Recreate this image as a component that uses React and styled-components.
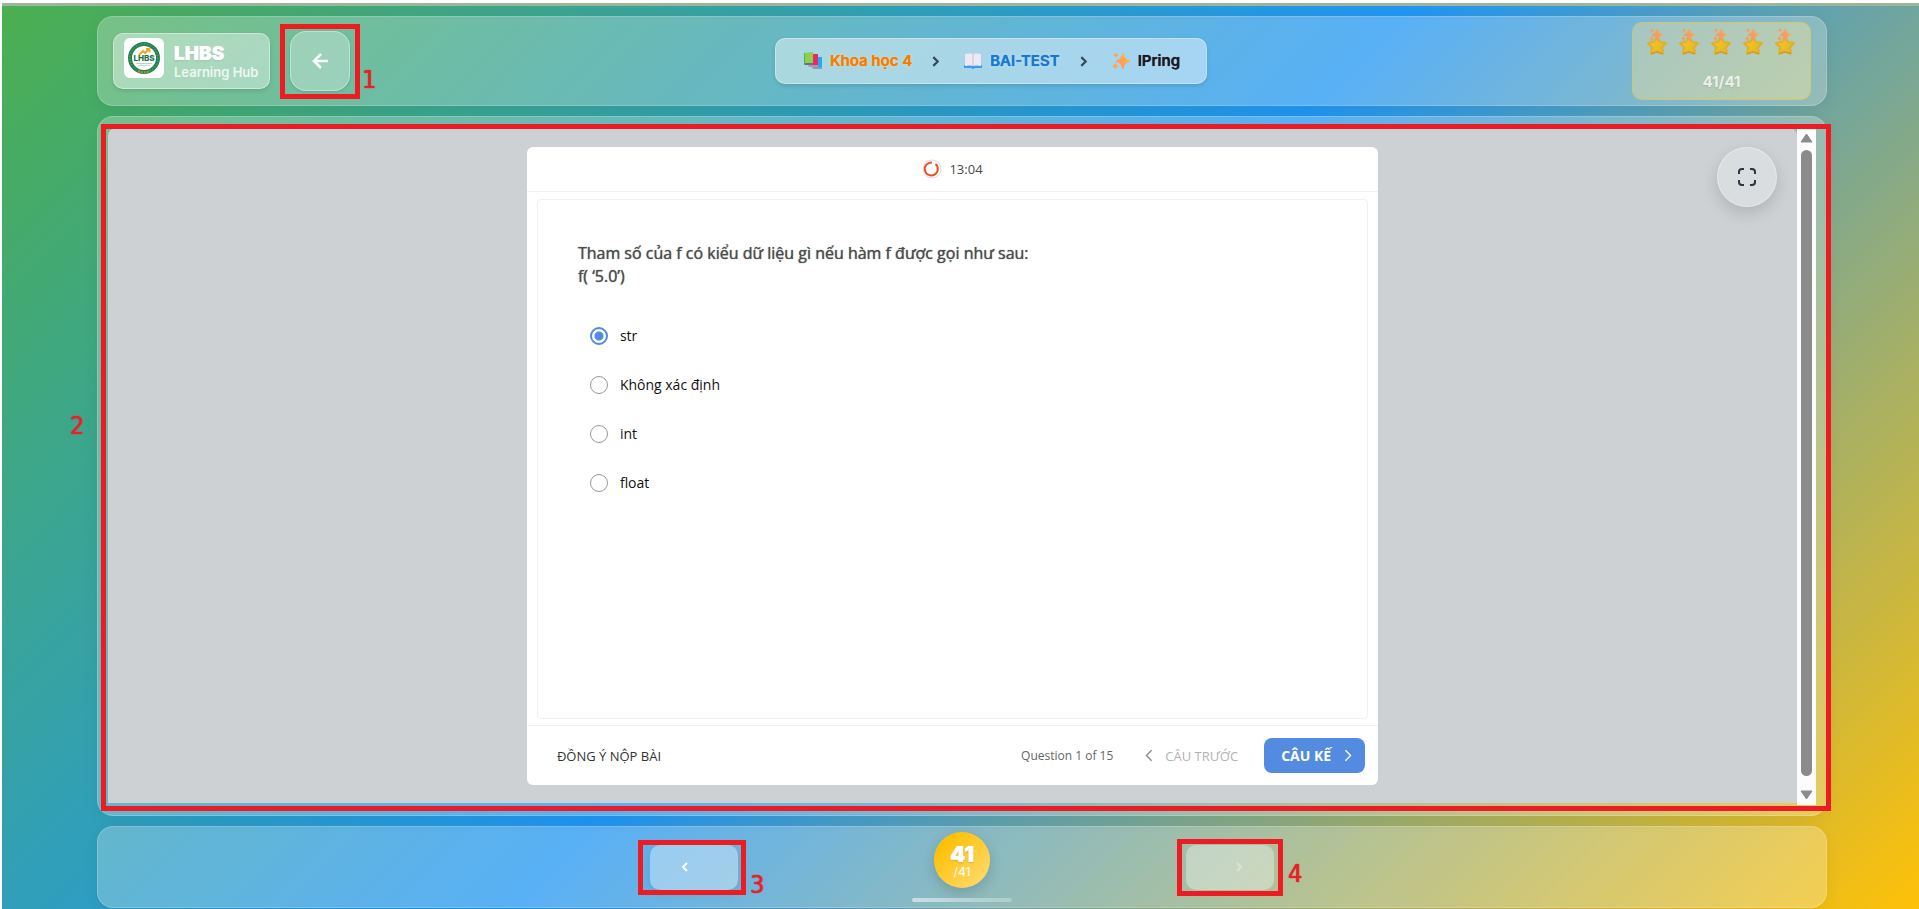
import React, { useState } from "react";
import styled, { createGlobalStyle, css } from "styled-components";

const GlobalStyle = createGlobalStyle`
  *, *::before, *::after { box-sizing: border-box; }
  body { margin: 0; background: #fff; font-family: Inter, "Liberation Sans", sans-serif; }
  button, input { font: inherit; }
`;

const Frame = styled.div`
  min-height: 100vh;
  padding: 3px 0 0 2px;
  display: flex;
  flex-direction: column;
`;

const Page = styled.div`
  flex: 1;
  display: flex;
  flex-direction: column;
  gap: 10px;
  padding: 10px 92px 1px 95px;
  border-top: 3px solid #9db69b;
  background: linear-gradient(135deg, #4caf50 0%, #2196f3 50%, #ffc107 100%);
`;

const glass = css`
  background: rgba(255, 255, 255, 0.25);
  border: 1px solid rgba(255, 255, 255, 0.2);
  border-radius: 16px;
  box-shadow: 0 4px 16px rgba(0, 0, 0, 0.06);
`;

const Header = styled.header`
  ${glass}
  height: 90px;
  padding: 0 15px;
  display: flex;
  justify-content: space-between;
  align-items: center;
`;

const HeaderLeft = styled.div`
  display: flex;
  align-items: center;
  gap: 20px;
`;

const Brand = styled.a`
  display: flex;
  align-items: center;
  gap: 10px;
  width: 157px;
  height: 56px;
  padding: 0 10px;
  border: 1px solid rgba(255, 255, 255, 0.4);
  border-radius: 10px;
  background: rgba(255, 255, 255, 0.4);
  box-shadow: 0 2px 4px rgba(0, 0, 0, 0.12);
  color: #fff;
  text-decoration: none;
`;

const LogoTile = styled.span`
  display: grid;
  place-items: center;
  flex: none;
  width: 40px;
  height: 40px;
  margin-bottom: 6px;
  border-radius: 6px;
  background: #fff;
`;

const BrandText = styled.span`
  display: flex;
  flex-direction: column;
  padding-top: 2px;
  white-space: nowrap;
`;

const BrandName = styled.strong`
  font-size: 19px;
  line-height: 20px;
  font-weight: 900;
  text-shadow: 0 0 1px #fff, 0 1px 2px rgba(0, 0, 0, 0.12);
`;

const BrandSub = styled.span`
  font-size: 13px;
  line-height: 16px;
  font-weight: 600;
  opacity: 0.8;
`;

const Marked = styled.div`
  position: relative;
  display: flex;
`;

const Outline = styled.span`
  position: absolute;
  inset: ${(p) => p.$inset};
  border: 5px solid #ed1c24;
  pointer-events: none;
  z-index: 2;
`;

const Mark = styled.span`
  position: absolute;
  ${(p) => p.$place}
  font: 400 25px/28px "DejaVu Sans Condensed", "DejaVu Sans", sans-serif;
  color: #e5222b;
  text-shadow: 0 0 1px #e5222b, 0 0 1px #e5222b;
  pointer-events: none;
  z-index: 2;
`;

const BackButton = styled.button`
  display: grid;
  place-items: center;
  width: 60px;
  height: 60px;
  padding: 0;
  color: #fff;
  border: 1px solid rgba(255, 255, 255, 0.35);
  border-radius: 16px;
  background: rgba(255, 255, 255, 0.3);
  box-shadow: 0 1px 3px rgba(0, 0, 0, 0.12);
`;

const Crumbs = styled.nav`
  display: flex;
  align-items: center;
  height: 46px;
  padding: 0 26px 0 28px;
  gap: 20px;
  border: 1px solid rgba(255, 255, 255, 0.35);
  border-radius: 10px;
  background: rgba(255, 255, 255, 0.45);
  box-shadow: 0 2px 4px rgba(0, 0, 0, 0.12);
`;

const Crumb = styled.a`
  display: flex;
  align-items: center;
  gap: 8px;
  font-size: 15px;
  line-height: 20px;
  font-weight: 600;
  color: ${(p) => p.$color};
  text-decoration: none;
  white-space: nowrap;
  text-shadow: 0 0 1px ${(p) => p.$color}, 0 0 3px rgba(255, 255, 255, 0.7);
  & ~ & {
    margin-left: 5px;
  }
`;

const Score = styled.div`
  display: flex;
  flex-direction: column;
  align-items: center;
  width: 179px;
  height: 78px;
  padding-top: 2px;
  gap: 15px;
  border: 1px solid rgba(255, 193, 7, 0.35);
  border-radius: 10px;
  background: linear-gradient(135deg, rgba(255, 193, 7, 0.15), rgba(255, 215, 64, 0.2)), rgba(255, 255, 255, 0.25);
`;

const Stars = styled.div`
  display: flex;
  gap: 10px;
`;

const ScoreText = styled.span`
  font-size: 15px;
  line-height: 20px;
  font-weight: 700;
  color: rgba(255, 255, 255, 0.8);
  text-shadow: 0 1px 2px rgba(0, 0, 0, 0.12);
`;

const Stage = styled.main`
  ${glass}
  position: relative;
  flex: 1;
  display: flex;
  padding: 11px 10px 10px;
`;

const Viewer = styled.section`
  position: relative;
  flex: 1;
  display: flex;
  justify-content: center;
  margin-bottom: 2px;
  padding: 19px 0 18px;
  border-radius: 8px 8px 0 0;
  background: #cdd1d4;
`;

const Scroll = styled.div`
  display: flex;
  flex-direction: column;
  align-items: center;
  justify-content: space-between;
  width: 19px;
  padding: 5px 0 5px;
  background: #fcfcfc;
`;

const Thumb = styled.div`
  flex: 1;
  width: 11px;
  margin: 7px 0 14px;
  border-radius: 6px;
  background: #8b8b8b;
`;

const FullButton = styled.button`
  position: absolute;
  top: 19px;
  right: 20px;
  display: grid;
  place-items: center;
  width: 60px;
  height: 60px;
  padding: 0;
  border: 1px solid rgba(255, 255, 255, 0.35);
  border-radius: 50%;
  background: #d9dddf;
  color: #2c3545;
  box-shadow: 0 6px 16px rgba(0, 0, 0, 0.14);
`;

const Quiz = styled.form`
  display: flex;
  flex-direction: column;
  width: 50.4%;
  border-radius: 6px;
  background: #fff;
  font-family: "Open Sans", "Noto Sans", sans-serif;
`;

const Timer = styled.div`
  display: flex;
  align-items: center;
  justify-content: center;
  gap: 7px;
  height: 45px;
  padding-bottom: 1px;
  border-bottom: 1px solid #f1f1f1;
  font-size: 13px;
  line-height: 18px;
  color: #4a4a4a;
`;

const Question = styled.fieldset`
  flex: 1;
  margin: 7px 10px 6px;
  padding: 0 40px;
  min-width: 0;
  border: 1px solid #f1f1f1;
  border-radius: 4px;
`;

const Prompt = styled.legend`
  float: left;
  width: 100%;
  padding: 42px 0 38px;
  font-size: 16px;
  line-height: 23px;
  font-weight: 500;
  color: #4d4d4d;
  text-shadow: 0 0 1px #4d4d4d;
`;

const Options = styled.div`
  clear: both;
  display: flex;
  flex-direction: column;
  gap: 29px;
  padding-left: 12px;
`;

const Option = styled.label`
  display: flex;
  align-items: center;
  gap: 12px;
  font-size: 14px;
  line-height: 20px;
  color: #111;
`;

const Radio = styled.input`
  appearance: none;
  width: 18px;
  height: 18px;
  margin: 0;
  border: 1px solid #999;
  border-radius: 50%;
  background: #fff;
  &:checked {
    border: 2px solid #4f8be0;
    background: radial-gradient(circle, #4f8be0 0 4px, #fff 5px);
  }
`;

const QuizFooter = styled.div`
  display: flex;
  align-items: center;
  height: 60px;
  padding: 0 13px 0 30px;
  border-top: 1px solid #f1f1f1;
  font-size: 13px;
  line-height: 18px;
`;

const TextButton = styled.button`
  display: flex;
  align-items: center;
  gap: 12px;
  padding: 0;
  border: 0;
  background: none;
  color: ${(p) => p.$color};
`;

const Counter = styled.span`
  margin: 0 32px 0 auto;
  font-size: 12px;
  color: #666;
`;

const NextButton = styled.button`
  display: flex;
  align-items: center;
  justify-content: space-between;
  width: 101px;
  height: 35px;
  margin-left: 26px;
  padding: 0 13px 0 17px;
  border: 0;
  border-radius: 8px;
  background: #528be0;
  color: #fff;
  font-size: 14px;
  font-weight: 700;
`;

const Pager = styled.footer`
  ${glass}
  height: 82px;
  display: grid;
  grid-template-columns: 1fr 100px 1fr;
  column-gap: 174px;
  align-items: center;
`;

const PageButton = styled.button`
  display: grid;
  align-items: center;
  justify-items: ${(p) => (p.$next ? "end" : "start")};
  width: 88px;
  height: 45px;
  padding: 0 32px;
  border: 0;
  border-radius: 10px;
  background: rgba(255, 255, 255, 0.35);
  color: ${(p) => (p.$next ? "rgba(255, 255, 255, 0.35)" : "#fff")};
  box-shadow: ${(p) => (p.$next ? "none" : "0 3px 10px rgba(0, 0, 0, 0.1)")};
`;

const PagerSide = styled.div`
  display: flex;
  justify-content: ${(p) => (p.$end ? "flex-start" : "flex-end")};
`;

const Progress = styled.div`
  display: flex;
  flex-direction: column;
  align-items: center;
  gap: 10px;
`;

const Badge = styled.div`
  display: flex;
  flex-direction: column;
  align-items: center;
  justify-content: center;
  width: 56px;
  height: 56px;
  border-radius: 50%;
  background: linear-gradient(135deg, #ffc107 20%, #ffd96a 90%);
  color: #fff;
  box-shadow: 0 5px 14px rgba(0, 0, 0, 0.16);
`;

const BadgeNow = styled.strong`
  font-size: 22px;
  line-height: 24px;
  font-weight: 900;
  text-shadow: 0 0 1px #fff, 0 1px 2px rgba(0, 0, 0, 0.2);
`;

const BadgeTotal = styled.span`
  font-size: 12px;
  line-height: 12px;
  font-weight: 500;
  opacity: 0.9;
`;

const Track = styled.div`
  width: 100px;
  height: 4px;
  border-radius: 2px;
  background: linear-gradient(90deg, rgba(255, 255, 255, 0.55), rgba(255, 255, 255, 0.25));
`;

function Logo() {
  return (
    <svg width="34" height="34" viewBox="0 0 34 34" aria-hidden="true">
      <circle cx="17" cy="17" r="14" fill="#fff" stroke="#23834e" strokeWidth="4" />
      <circle cx="17" cy="17" r="14" fill="none" stroke="#7fb795" strokeWidth="1" strokeDasharray="1 2" />
      <path d="M11 30Q17 32.500 23 30" fill="none" stroke="#b3912c" strokeWidth="2" strokeDasharray="2 1" />
      <path d="M12 14l4-4 2 2 4-4M19 8h3.500v3.500" fill="none" stroke="#eda72e" strokeWidth="2" />
      <text x="17" y="20" textAnchor="middle" fontFamily="Inter, sans-serif" fontSize="8" fontWeight="800" fill="#1c7145">LHBS</text>
      <path d="M9 22.500h16M11 25q3-2 6 0q3-2 6 0" fill="none" stroke="#b9d5c5" strokeWidth="1" />
    </svg>
  );
}

function SparkleShape() {
  return (
    <>
      <path d="M11 1Q12 7.500 18 9Q12 10.500 11 17Q9.500 10.500 4 9Q9.500 7.500 11 1Z" strokeWidth="1" strokeLinejoin="round" />
      <path d="M4 0Q4.500 2.500 7 3Q4.500 3.500 4 6Q3.500 3.500 1 3Q3.500 2.500 4 0Z" />
      <path d="M3.500 10Q4.300 13.500 7.500 14Q4.300 14.500 3.500 18Q2.700 14.500 0 14Q2.700 13.500 3.500 10Z" />
    </>
  );
}

function Sparkles() {
  return (
    <svg width="18" height="18" viewBox="0 0 18 18" aria-hidden="true">
      <defs>
        <linearGradient id="spark" x1="0" y1="1" x2="1" y2="0">
          <stop offset="0" stopColor="#ff8a6c" />
          <stop offset="1" stopColor="#ffc23e" />
        </linearGradient>
      </defs>
      <g fill="url(#spark)" stroke="url(#spark)" strokeWidth="0"><SparkleShape /></g>
    </svg>
  );
}

function Books() {
  return (
    <svg width="18" height="18" viewBox="0 0 18 18" aria-hidden="true">
      <path d="M9 5h9v10H9z" fill="#25a9f0" />
      <path d="M8 15h10v2H9z" fill="#7f9fc4" />
      <path d="M5 2h9v11H5z" fill="#ea2862" />
      <path d="M4 13h10v2H5z" fill="#b792b4" />
      <path d="M0 1l9-1v12H0z" fill="#8bd14d" />
      <path d="M0 11h9v2H1q-1 0-1-2z" fill="#66727f" />
      <path d="M0 1h1v11H0z" fill="#60ae3c" />
    </svg>
  );
}

function OpenBook() {
  return (
    <svg width="18" height="16" viewBox="0 0 18 16" aria-hidden="true">
      <path d="M0 12h18v3h-7l-2 1-2-1H0z" fill="#3e9be8" />
      <path d="M0 3h18v9H0z" fill="#a9cdf0" />
      <path d="M1 1q5-1 8 0q3-1 8 0v12q-5-1-8 0q-3-1-8 0z" fill="#eee8f5" />
      <path d="M9 1v12" stroke="#c7bfd5" />
    </svg>
  );
}

function Star() {
  return (
    <svg width="22" height="32" viewBox="0 0 22 32" aria-hidden="true">
      <defs>
        <linearGradient id="gold" x1="0" y1="0" x2="1" y2="1">
          <stop offset="0" stopColor="#f3c92e" />
          <stop offset="1" stopColor="#e2b526" />
        </linearGradient>
        <linearGradient id="peach" x1="0" y1="1" x2="1" y2="0">
          <stop offset="0" stopColor="#f88d70" />
          <stop offset="1" stopColor="#f3b050" />
        </linearGradient>
      </defs>
      <path d="M11 12l3 5 6 1-4 4.500 1 6-6-2-6 2 1-6L2 18l6-1z" fill="url(#gold)" stroke="#dfb128" strokeWidth="2" strokeLinejoin="round" />
      <path d="M5 29l6-2 6 2" fill="none" stroke="#c98f2a" strokeWidth="1" />
      <g fill="url(#peach)" stroke="url(#peach)" strokeWidth="0" transform="translate(3 3) scale(.75)"><SparkleShape /></g>
    </svg>
  );
}

function Chevron({ size = 12, width = 2, color = "currentColor", left }) {
  return (
    <svg width={Math.round(size * 0.6)} height={size} viewBox="0 0 6 10" aria-hidden="true">
      <path d={left ? "M5 1L1 5l4 4" : "M1 1l4 4-4 4"} fill="none" stroke={color} strokeWidth={width} />
    </svg>
  );
}

const ANSWERS = ["str", "Không xác định", "int", "float"];

export default function App() {
  const [answer, setAnswer] = useState("str");
  return (
    <Frame>
      <GlobalStyle />
      <Page>
        <Header>
          <HeaderLeft>
            <Brand href="#home">
              <LogoTile><Logo /></LogoTile>
              <BrandText>
                <BrandName>LHBS</BrandName>
                <BrandSub>Learning Hub</BrandSub>
              </BrandText>
            </Brand>
            <Marked>
              <BackButton type="button" aria-label="Back">
                <svg width="18" height="18" viewBox="0 0 18 18" aria-hidden="true">
                  <path d="M17 9H3M10 2L3 9l7 7" fill="none" stroke="currentColor" strokeWidth="2.500" />
                </svg>
              </BackButton>
              <Outline $inset="-7px -10px -8px" />
              <Mark $place="left: 72px; top: 35px;">1</Mark>
            </Marked>
          </HeaderLeft>
          <Crumbs aria-label="Breadcrumb">
            <Crumb href="#course" $color="#f57c00"><Books />Khoa học 4</Crumb>
            <Chevron color="#39485a" size={11} />
            <Crumb href="#test" $color="#1976d2"><OpenBook />BAI-TEST</Crumb>
            <Chevron color="#39485a" size={11} />
            <Crumb href="#lesson" $color="#161b2b"><Sparkles />IPring</Crumb>
          </Crumbs>
          <Score>
            <Stars>{[0, 1, 2, 3, 4].map((n) => <Star key={n} />)}</Stars>
            <ScoreText>41/41</ScoreText>
          </Score>
        </Header>

        <Stage>
          <Viewer>
            <Quiz onSubmit={(e) => e.preventDefault()}>
              <Timer>
                <svg width="20" height="20" viewBox="0 0 20 20" aria-hidden="true">
                  <circle cx="10" cy="10" r="9" fill="#fff" stroke="#ddd" />
                  <path d="M13.500 5A6.500 6.500 0 1 1 10 3.500" fill="none" stroke="#f04e23" strokeWidth="2" />
                </svg>
                13:04
              </Timer>
              <Question>
                <Prompt>
                  Tham số của f có kiểu dữ liệu gì nếu hàm f được gọi như sau:
                  <br />
                  f( ‘5.0’)
                </Prompt>
                <Options>
                  {ANSWERS.map((a) => (
                    <Option key={a}>
                      <Radio type="radio" name="answer" checked={answer === a} onChange={() => setAnswer(a)} />
                      {a}
                    </Option>
                  ))}
                </Options>
              </Question>
              <QuizFooter>
                <TextButton type="button" $color="#333">ĐỒNG Ý NỘP BÀI</TextButton>
                <Counter>Question 1 of 15</Counter>
                <TextButton type="button" $color="#b3b3b3" disabled>
                  <Chevron left size={13} width={1} color="#888" />CÂU TRƯỚC
                </TextButton>
                <NextButton type="submit">CÂU KẾ<Chevron size={13} width={1} /></NextButton>
              </QuizFooter>
            </Quiz>
            <FullButton type="button" aria-label="Fullscreen">
              <svg width="18" height="18" viewBox="0 0 18 18" aria-hidden="true">
                <path d="M1 6V4a3 3 0 0 1 3-3h2M12 1h2a3 3 0 0 1 3 3v2M17 12v2a3 3 0 0 1-3 3h-2M6 17H4a3 3 0 0 1-3-3v-2" fill="none" stroke="currentColor" strokeWidth="2" />
              </svg>
            </FullButton>
          </Viewer>
          <Scroll>
            <svg width="13" height="10" viewBox="0 0 13 10" aria-hidden="true">
              <path d="M6.500 1L12 9H1z" fill="#8b8b8b" stroke="#8b8b8b" strokeLinejoin="round" />
            </svg>
            <Thumb />
            <svg width="13" height="10" viewBox="0 0 13 10" aria-hidden="true">
              <path d="M6.500 9L12 1H1z" fill="#8b8b8b" stroke="#8b8b8b" strokeLinejoin="round" />
            </svg>
          </Scroll>
          <Outline $inset="7px -5px 4px 3px" />
          <Mark $place="left: -28px; top: 295px;">2</Mark>
        </Stage>

        <Pager>
          <PagerSide>
            <Marked>
              <PageButton type="button" aria-label="Previous">
                <Chevron left size={10} />
              </PageButton>
              <Outline $inset="-5px -8px -5px -12px" />
              <Mark $place="left: 100px; top: 26px;">3</Mark>
            </Marked>
          </PagerSide>
          <Progress>
            <Badge>
              <BadgeNow>41</BadgeNow>
              <BadgeTotal>/41</BadgeTotal>
            </Badge>
            <Track />
          </Progress>
          <PagerSide $end>
            <Marked>
              <PageButton type="button" aria-label="Next" $next disabled>
                <Chevron size={10} />
              </PageButton>
              <Outline $inset="-6px -9px" />
              <Mark $place="left: 102px; top: 15px;">4</Mark>
            </Marked>
          </PagerSide>
        </Pager>
      </Page>
    </Frame>
  );
}
